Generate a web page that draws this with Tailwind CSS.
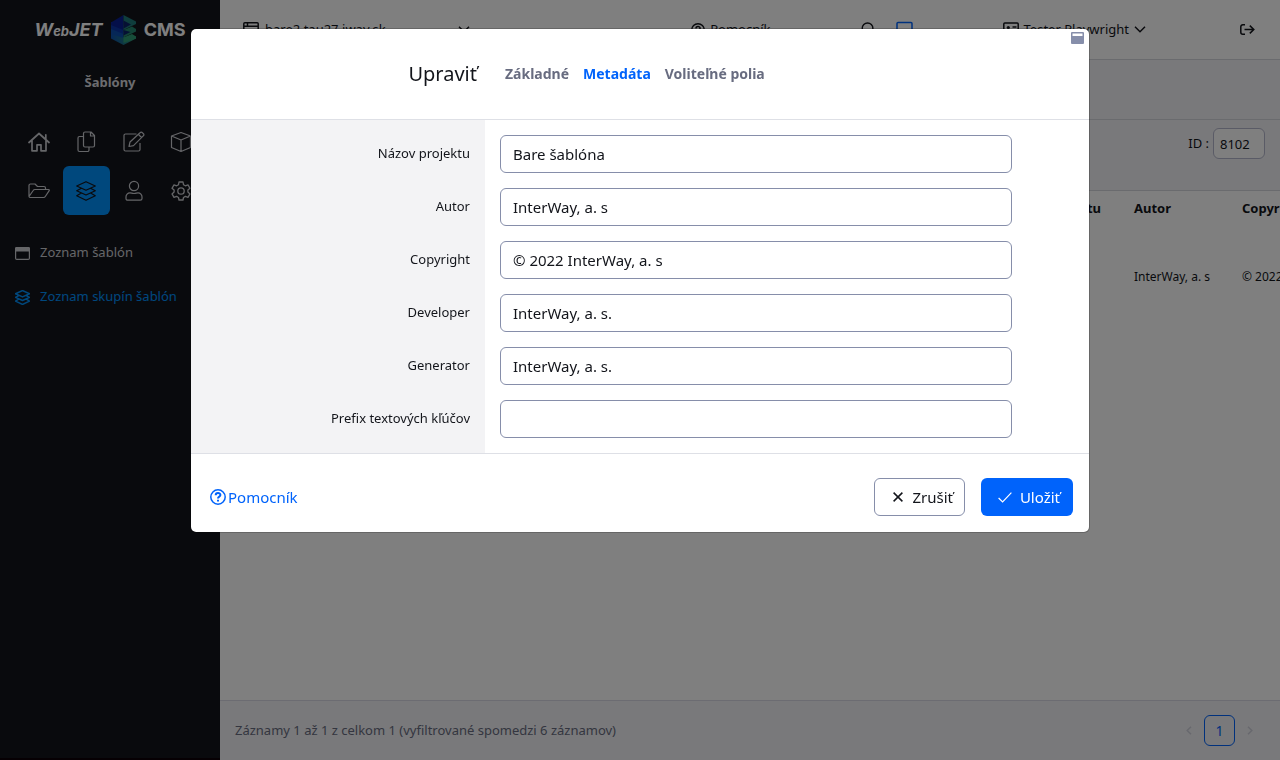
<!DOCTYPE html>
<html lang="sk">
<head>
<meta charset="utf-8">
<meta name="viewport" content="width=device-width, initial-scale=1">
<title>WebJET CMS – Zoznam skupín šablón</title>
<script src="https://cdn.jsdelivr.net/npm/@tailwindcss/browser@4"></script>
</head>
<body class="bg-white font-['Noto_Sans',sans-serif] text-[13px] text-[#13151b]">
<div class="flex h-screen overflow-hidden">

  <aside class="flex w-55 shrink-0 flex-col border-b-2 border-[#0c0006] bg-[#13151b] text-[#cbccd1]">
    <a href="#" aria-label="WebJET CMS" class="flex h-15 items-center justify-center gap-2 font-['Inter',sans-serif] font-bold text-white">
      <span class="text-[18px] italic leading-none">W<span class="text-[13px]">eb</span>JET</span>
      <svg class="h-[30px] w-[25px]" viewBox="0 0 25 30" aria-hidden="true">
        <defs>
          <linearGradient id="lg" x1="0" x2="1"><stop offset="0" stop-color="#0d4fae"/><stop offset=".5" stop-color="#1a7088"/><stop offset="1" stop-color="#35a578"/></linearGradient>
        </defs>
        <path fill="url(#lg)" d="M0 17 12.500 22 25 21.500v2L12.500 30 0 23.500z"/>
        <path fill="#0d4fae" d="M0 12l12.500 5v6L0 19z"/>
        <path fill="#0a35a6" d="M0 7 12.500 10v9L0 14z"/>
        <path fill="#081f92" d="M0 7.500 12.500 0v15L0 10z"/>
        <path fill="#1f7a78" d="M12.500 0 25 6.500v2.500l-12.500 6z"/>
        <path fill="#24866e" d="M12.500 15 21 11.500 25 14v2.500l-12.500 6z"/>
        <path fill="#2f9c74" d="M12.500 22.500 21 19l4 2.500v2L12.500 28z"/>
        <path fill="#0c2168" d="M12.500 5.500 20 9.500l-7.500 4zM12.500 15l7 2-7 3.500z"/>
      </svg>
      <span class="text-[18px] leading-none">CMS</span>
    </a>
    <h2 class="flex h-[46px] items-center justify-center text-[13px] font-bold text-[#d8d9de]">Šablóny</h2>

    <nav aria-label="Moduly" class="mx-[15px] mt-3 grid grid-cols-4">
      <a href="#" aria-label="Domov" class="flex h-12 items-center justify-center"><svg class="size-[22px]" viewBox="0 0 22 22" fill="none" stroke="currentColor" stroke-width="1.700" stroke-linejoin="round" stroke-linecap="round"><path d="M1 11.500 11 2.500l10 9M4 9.500v10.300h5v-6h4v6h5V9.500M17.800 3.800v4.500"/></svg></a>
      <a href="#" aria-label="Stránky" class="flex h-12 items-center justify-center"><svg class="size-[22px]" viewBox="0 0 22 22" fill="none" stroke="currentColor" stroke-width="1.200" stroke-linejoin="round"><path d="M8.500 2.500a1.500 1.500 0 0 1 1.500-1.500h6L19.500 4.500v10a1.500 1.500 0 0 1-1.500 1.500h-8A1.500 1.500 0 0 1 8.500 14.500zM15.500 1v4h4M8.500 5.500H4.500A1.500 1.500 0 0 0 3 7v12A1.500 1.500 0 0 0 4.500 20.500h8A1.500 1.500 0 0 0 14 19v-3"/></svg></a>
      <a href="#" aria-label="Novinky" class="flex h-12 items-center justify-center"><svg class="size-[22px]" viewBox="0 0 22 22" fill="none" stroke="currentColor" stroke-width="1.200" stroke-linejoin="round"><path d="M13.500 3H2.500A1.500 1.500 0 0 0 1 4.500v14A1.500 1.500 0 0 0 2.500 20h13a1.500 1.500 0 0 0 1.500-1.500V12M6 15.500l1-4.500L17.300 1.500a1.300 1.300 0 0 1 1.900 0l1.300 1.300a1.300 1.300 0 0 1 0 1.900L10.500 14.700zM15.500 3.500l3 3"/></svg></a>
      <a href="#" aria-label="Aplikácie" class="flex h-12 items-center justify-center"><svg class="size-[22px]" viewBox="0 0 22 22" fill="none" stroke="currentColor" stroke-width="1.200" stroke-linejoin="round"><path d="M11 1.500 20.500 5v11.500l-9.500 4-9.500-4V5zM1.500 5l9.500 4 9.500-4M11 9v11.500"/></svg></a>
      <a href="#" aria-label="Súbory" class="flex h-[49px] items-center justify-center"><svg class="size-[22px]" viewBox="0 0 22 22" fill="none" stroke="currentColor" stroke-width="1.200" stroke-linejoin="round"><path d="M1 16.500V5.500A1.500 1.500 0 0 1 2.500 4H7l2.500 2.500h6.500A1.500 1.500 0 0 1 17.500 8v1.500M1 16.500a1.200 1.200 0 0 0 1 1h13.500a2 2 0 0 0 1.800-1L21.200 10.700a.8.800 0 0 0-.7-1.200H7a2 2 0 0 0-1.800 1z"/></svg></a>
      <a href="#" aria-label="Šablóny" aria-current="page" class="flex h-[49px] items-center justify-center rounded-md bg-[#0090fb] text-[#13151b]"><svg class="size-[22px]" viewBox="0 0 22 22" fill="none" stroke="currentColor" stroke-width="1.200" stroke-linejoin="round"><path d="M11 1.700 20.300 6 11 10.300 1.700 6zM6 8.500 1.700 10.700 11 15l9.300-4.300L16 8.500M6 13.300 1.700 15.700 11 20.300l9.300-4.600-4.300-2.400"/></svg></a>
      <a href="#" aria-label="Používatelia" class="flex h-[49px] items-center justify-center"><svg class="size-[22px]" viewBox="0 0 22 22" fill="none" stroke="currentColor" stroke-width="1.200" stroke-linejoin="round"><circle cx="11" cy="6" r="4.600"/><path d="M3 18.500v-1.500a4 4 0 0 1 4-4.200c1.500 0 2 .7 4 .7s2.500-.7 4-.7a4 4 0 0 1 4 4.200v1.500a1.700 1.700 0 0 1-1.700 1.700H4.700A1.700 1.700 0 0 1 3 18.500z"/></svg></a>
      <a href="#" aria-label="Nastavenia" class="flex h-[49px] items-center justify-center"><svg class="size-[22px]" viewBox="0 0 22 22" fill="none" stroke="currentColor" stroke-width="1.300" stroke-linejoin="round"><circle cx="11" cy="11" r="3.200"/><path d="M9 2h4l.5 2.700 1.900 1.100 2.600-.9 2 3.400-2.100 1.800v2l2.100 1.800-2 3.400-2.600-.9-1.900 1.100L13 20H9l-.5-2.500-1.900-1.100-2.600.9-2-3.400 2.100-1.800v-2L2 8.300l2-3.400 2.600.9 1.900-1.100z"/></svg></a>
    </nav>

    <nav aria-label="Menu" class="mt-4 flex flex-col">
      <a href="#" class="flex h-11 items-center gap-[10px] px-[15px]"><svg class="h-[13px] w-[15px]" viewBox="0 0 15 13" aria-hidden="true"><rect x=".6" y=".6" width="13.800" height="11.800" rx="1.200" fill="none" stroke="currentColor" stroke-width="1.200"/><path fill="currentColor" d="M0 1.500A1.500 1.500 0 0 1 1.500 0h12A1.500 1.500 0 0 1 15 1.500v3H0z"/></svg>Zoznam šablón</a>
      <a href="#" aria-current="page" class="flex h-11 items-center gap-[10px] px-[15px] text-[#0090fb]"><svg class="size-[15px]" viewBox="1 1 20 20" fill="none" stroke="currentColor" stroke-width="1.900" stroke-linejoin="round" aria-hidden="true"><path d="M11 1.700 20.300 6 11 10.300 1.700 6zM6 8.500 1.700 10.700 11 15l9.300-4.300L16 8.500M6 13.300 1.700 15.700 11 20.300l9.300-4.600-4.300-2.400"/></svg>Zoznam skupín šablón</a>
    </nav>
  </aside>

  <main class="flex min-w-0 flex-1 flex-col">
    <header class="flex h-15 shrink-0 items-center gap-[90px] border-b border-[#d5d6dc] pl-[23px] pr-[25px]">
      <button type="button" class="flex w-[227px] items-center gap-[6px] whitespace-nowrap">
        <svg class="size-4" viewBox="0 0 16 16" fill="none" stroke="currentColor" stroke-width="1.500"><rect x=".8" y=".8" width="14.400" height="14.400" rx="1"/><path d="M1 4.300h14M4.500 1v3"/></svg>
        bare2.tau27.iway.sk
        <svg class="ml-auto h-[7px] w-3" viewBox="0 0 12 7" fill="none" stroke="currentColor" stroke-width="1.500"><path d="m1 .8 5 5 5-5"/></svg>
      </button>
      <a href="#" class="ml-auto flex items-center gap-[5px]">
        <svg class="size-[14px]" viewBox="0 0 16 16" fill="none" stroke="currentColor" stroke-width="1.600"><circle cx="8" cy="8" r="7.200"/><path stroke-width="1.800" d="M5.700 6.300c0-3 4.700-2.900 4.700-.2C10.400 7.700 8 7.500 8 9.400M8 10.700v1.700"/></svg>
        Pomocník
      </a>
      <div class="flex items-center gap-5">
        <button type="button" aria-label="Hľadať" class="flex"><svg class="size-[15px]" viewBox="0 0 16 16" fill="none" stroke="currentColor" stroke-width="1.500"><circle cx="7" cy="6.700" r="5.700"/><path d="m11 11 4 4"/></svg></button>
        <button type="button" aria-label="Panel" class="flex text-[#0063fb]"><svg class="size-[17px]" viewBox="0 0 17 17" fill="none" stroke="currentColor" stroke-width="1.500"><rect x="1" y="1.500" width="15" height="13" rx="1"/></svg></button>
      </div>
      <button type="button" class="flex items-center gap-[5px] whitespace-nowrap">
        <svg class="size-4" viewBox="0 0 16 16" fill="none" stroke="currentColor" stroke-width="1.500"><rect x=".8" y="1" width="14.400" height="13.200" rx="1"/><circle cx="5.300" cy="5.500" r="1.600" fill="currentColor" stroke="none"/><path d="M3 11.500c0-3.500 4.600-3.500 4.600 0M9.500 5h4M9.500 8h4"/></svg>
        Tester Playwright
        <svg class="h-[7px] w-3" viewBox="0 0 12 7" fill="none" stroke="currentColor" stroke-width="1.500"><path d="m1 .8 5 5 5-5"/></svg>
      </button>
      <button type="button" aria-label="Odhlásiť" class="ml-1 flex"><svg class="h-[11px] w-[15px]" viewBox="0 0 15 11" fill="none" stroke="currentColor" stroke-width="1.500"><path d="M5 .8H2.800a2 2 0 0 0-2 2v5.400a2 2 0 0 0 2 2H5M4.500 5.500H13.500M9.800 1.600l4 3.900-4 3.900"/></svg></button>
    </header>

    <div class="h-15 shrink-0 border-b border-[#d5d6dc] bg-[#f3f3f6]"></div>
    <div class="flex h-[71px] shrink-0 items-start justify-end gap-1 border-b border-[#d5d6dc] bg-[#f3f3f6] px-[15px] pt-2">
      <label for="row-id" class="leading-[31px]">ID :</label>
      <input id="row-id" value="8102" class="h-[31px] w-[52px] rounded-md border border-[#b5b7cc] bg-white px-[6px]">
    </div>

    <div class="min-h-0 flex-1 overflow-x-auto overflow-y-hidden [scrollbar-width:none]">
      <table class="w-[1200px] table-fixed text-left text-[12px]">
        <colgroup><col class="w-[899px]"><col class="w-[108px]"><col></colgroup>
        <thead><tr class="h-[70px] align-top text-[13px]"><th class="px-[15px] pr-[18px] pt-2 text-right">Názov projektu</th><th class="px-[15px] pt-2">Autor</th><th class="px-[15px] pt-2">Copyright</th></tr></thead>
        <tbody><tr class="h-8 whitespace-nowrap"><td class="px-[15px]"></td><td class="px-[15px]">InterWay, a. s</td><td class="px-[15px]">© 2022 InterWay, a. s</td></tr></tbody>
      </table>
    </div>

    <footer class="flex h-15 shrink-0 items-center justify-between border-t border-[#d8d9e4] bg-[#f3f3f6] pl-[15px] pr-[27px] text-[#686c80]">
      <p>Záznamy 1 až 1 z celkom 1 (vyfiltrované spomedzi 6 záznamov)</p>
      <nav aria-label="Stránkovanie" class="flex items-center gap-3">
        <button type="button" disabled aria-label="Predchádzajúca" class="flex text-[#d0d1dc]"><svg class="h-[9px] w-[6px]" viewBox="0 0 6 9" fill="none" stroke="currentColor" stroke-width="1.500"><path d="M5 .8 1.200 4.500 5 8.200"/></svg></button>
        <button type="button" aria-current="page" class="h-[31px] w-[31px] rounded-md border border-[#0063fb] text-[14px] text-[#0063fb]">1</button>
        <button type="button" disabled aria-label="Nasledujúca" class="flex text-[#d0d1dc]"><svg class="h-[9px] w-[6px]" viewBox="0 0 6 9" fill="none" stroke="currentColor" stroke-width="1.500"><path d="m1 .8 3.800 3.700L1 8.200"/></svg></button>
      </nav>
    </footer>
  </main>
</div>

<div class="fixed inset-0 overflow-auto bg-black/50">
  <div role="dialog" aria-modal="true" aria-labelledby="dlg-title" class="relative mx-auto mt-7 w-full max-w-[900px] rounded-md border border-black/20 bg-white bg-clip-padding">
    <button type="button" aria-label="Maximalizovať" class="absolute right-[5px] top-[3px] text-[#868eaa]"><svg class="block h-3 w-[13px]" viewBox="0 0 13 12"><path fill="currentColor" fill-rule="evenodd" d="M1 0h11a1 1 0 0 1 1 1v10a1 1 0 0 1-1 1H1a1 1 0 0 1-1-1V1a1 1 0 0 1 1-1zM1.500 1.500v2.500h10V1.500z"/></svg></button>

    <header class="flex h-[91px] items-center border-b border-[#dee0e6]">
      <h1 id="dlg-title" class="w-[286px] text-right text-[20px]">Upraviť</h1>
      <div role="tablist" class="ml-7 flex gap-[14px] pb-px text-[14px] font-bold text-[#686c80]">
        <button type="button" role="tab" aria-selected="false">Základné</button>
        <button type="button" role="tab" aria-selected="true" class="text-[#0063fb]">Metadáta</button>
        <button type="button" role="tab" aria-selected="false">Voliteľné polia</button>
      </div>
    </header>

    <form class="grid grid-cols-[294px_1fr]">
      <div class="flex flex-col gap-[17px] bg-[#f3f3f5] py-[15px] pr-[15px] text-right leading-[36px]">
        <label for="f-name">Názov projektu</label>
        <label for="f-author">Autor</label>
        <label for="f-copy">Copyright</label>
        <label for="f-dev">Developer</label>
        <label for="f-gen">Generator</label>
        <label for="f-prefix">Prefix textových kľúčov</label>
      </div>
      <div class="flex flex-col gap-[15px] py-[15px] pl-[15px] pr-[77px] text-[15px]">
        <input id="f-name" value="Bare šablóna" class="h-[38px] rounded-md border border-[#868eaa] px-3">
        <input id="f-author" value="InterWay, a. s" class="h-[38px] rounded-md border border-[#868eaa] px-3">
        <input id="f-copy" value="© 2022 InterWay, a. s" class="h-[38px] rounded-md border border-[#868eaa] px-3">
        <input id="f-dev" value="InterWay, a. s." class="h-[38px] rounded-md border border-[#868eaa] px-3">
        <input id="f-gen" value="InterWay, a. s." class="h-[38px] rounded-md border border-[#868eaa] px-3">
        <input id="f-prefix" class="h-[38px] rounded-md border border-[#868eaa] px-3">
      </div>
    </form>

    <footer class="flex items-center gap-4 border-t border-[#dee0e6] px-4 pb-4 pt-6 text-[15px]">
      <a href="#" class="mr-auto ml-[3px] flex items-center gap-[2px] text-[#0063fb]">
        <svg class="size-4" viewBox="0 0 16 16" fill="none" stroke="currentColor" stroke-width="1.500"><circle cx="8" cy="8" r="7.200"/><path stroke-width="2" d="M5.700 6.300c0-3 4.700-2.900 4.700-.2C10.400 7.700 8 7.500 8 9.400M8 10.700v1.700"/></svg>
        Pomocník
      </a>
      <button type="button" class="flex h-[38px] w-[91px] items-center justify-end gap-[9px] rounded-md border border-[#868eaa] pr-[11px]">
        <svg class="size-[10px]" viewBox="0 0 10 10" fill="none" stroke="currentColor" stroke-width="1.500"><path d="m.6.600 8.800 8.800M9.400.600.600 9.400"/></svg>
        Zrušiť
      </button>
      <button type="button" class="flex h-[38px] w-[92px] items-center justify-end gap-[8px] rounded-md bg-[#0063fb] pr-[13px] text-white">
        <svg class="h-[11px] w-[14px]" viewBox="0 0 14 11" fill="none" stroke="currentColor" stroke-width="1.200"><path d="m.6 6 4 4L13.400.700"/></svg>
        Uložiť
      </button>
    </footer>
  </div>
</div>
</body>
</html>
